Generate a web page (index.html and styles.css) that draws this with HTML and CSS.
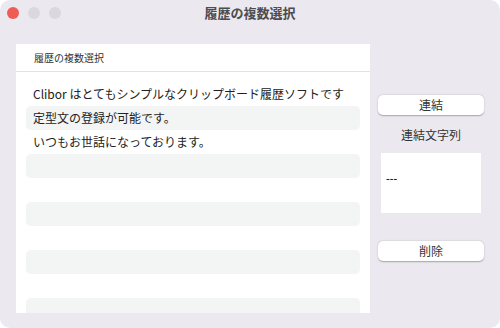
FILE: index.html
```html
<!DOCTYPE html>
<html lang="ja">

<head>
    <meta charset="UTF-8">
    <meta name="viewport" content="width=device-width, initial-scale=1.0">
    <title>履歴の複数選択</title>
    <link rel="stylesheet" href="styles.css">
</head>

<body>

    <div class="window">
        <div class="titlebar">
            <div class="lights">
                <span class="light red"></span>
                <span class="light"></span>
                <span class="light"></span>
            </div>
            <div class="title">履歴の複数選択</div>
        </div>

        <div class="content">
            <div class="panel">
                <div class="panel-head">履歴の複数選択</div>
                <ul class="history">
                    <li>Clibor はとてもシンプルなクリップボード履歴ソフトです</li>
                    <li>定型文の登録が可能です。</li>
                    <li>いつもお世話になっております。</li>
                    <li></li>
                    <li></li>
                    <li></li>
                    <li></li>
                    <li></li>
                    <li></li>
                    <li></li>
                    <li></li>
                </ul>
            </div>

            <div class="side">
                <button class="btn join">連結</button>
                <div class="label">連結文字列</div>
                <div class="joiner">---</div>
                <button class="btn delete">削除</button>
            </div>
        </div>
    </div>

</body>

</html>
```

FILE: styles.css
```css
body {
    margin: 0;
    background-color: #ffffff;
    font-family: "Noto Sans CJK JP", "Noto Sans", sans-serif;
}

.window {
    width: 500px;
    height: 328px;
    display: flex;
    flex-direction: column;
    border-radius: 10px;
    overflow: hidden;
    background-color: #ebe9ef;
}

.titlebar {
    position: relative;
    height: 26px;
    display: flex;
    align-items: center;
    justify-content: center;
}

.lights {
    position: absolute;
    left: 7px;
    top: 7px;
    display: flex;
    gap: 9px;
}

.light {
    width: 12px;
    height: 12px;
    border-radius: 50%;
    background-color: #d9d8dc;
}

.light.red {
    background-color: #ee5d53;
}

.title {
    font-size: 13px;
    font-weight: 700;
    color: #4d4c50;
    line-height: 26px;
}

.content {
    flex: 1;
    display: flex;
    padding: 18px 0 15px 16px;
    min-height: 0;
}

.panel {
    width: 354px;
    display: flex;
    flex-direction: column;
    background-color: #ffffff;
    overflow: hidden;
}

.panel-head {
    height: 27px;
    padding-left: 18px;
    font-size: 10px;
    line-height: 28px;
    color: #333333;
    border-bottom: 1px solid #e2e2e4;
}

.history {
    list-style: none;
    margin: 0;
    padding: 10px 10px 0;
}

.history li {
    height: 24px;
    padding-left: 7px;
    font-size: 12px;
    line-height: 24px;
    color: #222222;
    white-space: nowrap;
    border-radius: 5px;
}

.history li:nth-child(even) {
    background-color: #f3f4f4;
}

.side {
    width: 106px;
    margin-left: 8px;
    display: flex;
    flex-direction: column;
    align-items: center;
}

.btn {
    width: 106px;
    height: 20px;
    padding: 0;
    border: none;
    border-radius: 5px;
    background-color: #ffffff;
    box-shadow: 0 0.5px 1.5px rgba(0, 0, 0, 0.3);
    font-family: inherit;
    font-size: 12px;
    color: #333333;
    line-height: 20px;
}

.join {
    margin-top: 51px;
}

.label {
    margin-top: 12px;
    font-size: 12px;
    line-height: 16px;
    color: #333333;
}

.joiner {
    width: 100px;
    height: 60px;
    margin-top: 10px;
    padding: 18px 0 0 5px;
    box-sizing: border-box;
    background-color: #ffffff;
    font-size: 10px;
    font-weight: 700;
    line-height: 14px;
    color: #222222;
}

.delete {
    margin-top: 28px;
}
```
